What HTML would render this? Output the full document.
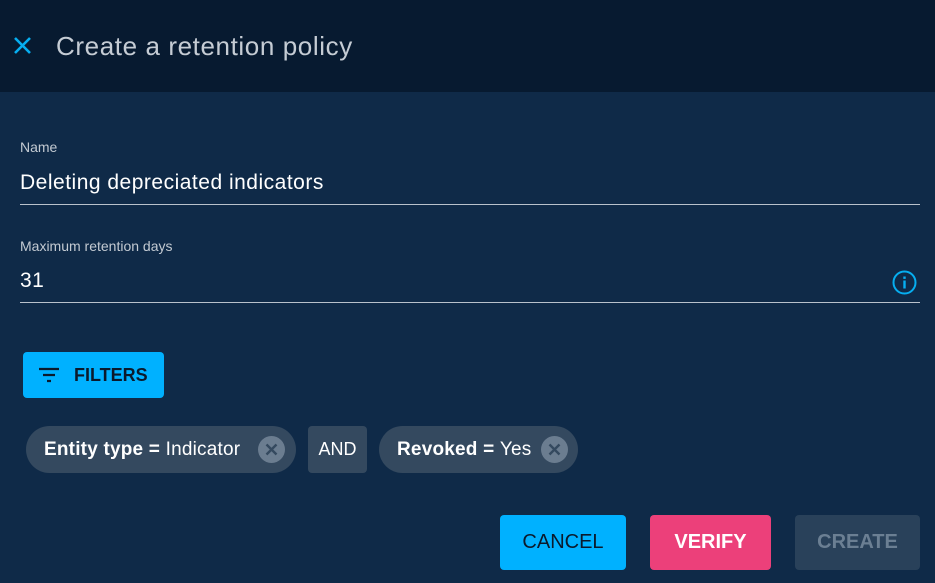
<!DOCTYPE html>
<html><head><style>
*{margin:0;padding:0;box-sizing:border-box}
body{width:935px;height:583px;background:#0f2a48;font-family:"Liberation Sans",sans-serif;position:relative;overflow:hidden;color:#fff}
.hdr{position:absolute;left:0;top:0;width:935px;height:92px;background:#071a30}
.ttl{position:absolute;left:56px;top:31px;font-size:26px;color:#c5ccd4;letter-spacing:0.6px}
.lbl{position:absolute;left:20px;font-size:14px;color:#c3cad2}
.val{position:absolute;left:20px;font-size:21px;color:#fff;letter-spacing:0.5px}
.line{position:absolute;left:20px;width:900px;height:1px;background:#b9c2cc}
.btn{position:absolute;border-radius:4px;font-size:20px;display:flex;align-items:center;justify-content:center;font-weight:bold}
.chip{position:absolute;top:426px;height:47px;background:#34495f;border-radius:24px;font-size:19px;display:flex;align-items:center;padding-left:18px;letter-spacing:0.2px}
.x{position:absolute;width:27px;height:27px;border-radius:50%;background:#6b7d90;top:10px}
</style></head><body>
<div class="hdr"></div>
<svg style="position:absolute;left:13px;top:36px" width="19" height="19" viewBox="0 0 19 19"><path d="M2 2L17 17M17 2L2 17" stroke="#06aef0" stroke-width="2.6"/></svg>
<div class="ttl">Create a retention policy</div>
<div class="lbl" style="top:139px">Name</div>
<div class="val" style="top:171px">Deleting depreciated indicators</div>
<div class="line" style="top:204px"></div>
<div class="lbl" style="top:238px">Maximum retention days</div>
<div class="val" style="top:269px">31</div>
<svg style="position:absolute;left:892px;top:270px" width="25" height="25" viewBox="0 0 25 25"><circle cx="12.5" cy="12.5" r="11" fill="none" stroke="#06aef0" stroke-width="2"/><rect x="11.3" y="10.5" width="2.4" height="8" fill="#06aef0"/><rect x="11.3" y="6.5" width="2.4" height="2.4" fill="#06aef0"/></svg>
<div class="line" style="top:302px"></div>
<div class="btn" style="left:23px;top:352px;width:141px;height:46px;background:#00b1ff;color:#0b1a2c;font-size:18px;justify-content:flex-start;padding-left:51px">FILTERS</div>
<svg style="position:absolute;left:38px;top:367px" width="22" height="16" viewBox="0 0 22 16"><path d="M1 2H21M5 8H17M9 14H13" stroke="#0b1a2c" stroke-width="2.2"/></svg>
<div class="chip" style="left:26px;width:270px"><b>Entity type =</b>&nbsp;Indicator<div class="x" style="left:232px"><svg width="27" height="27" viewBox="0 0 27 27"><path d="M8.5 8.5L18.5 18.5M18.5 8.5L8.5 18.5" stroke="#34495f" stroke-width="2.4"/></svg></div></div>
<div style="position:absolute;left:308px;top:426px;width:59px;height:47px;background:#34495f;border-radius:4px;font-size:18px;display:flex;align-items:center;justify-content:center">AND</div>
<div class="chip" style="left:379px;width:199px"><b>Revoked =</b>&nbsp;Yes<div class="x" style="left:162px"><svg width="27" height="27" viewBox="0 0 27 27"><path d="M8.5 8.5L18.5 18.5M18.5 8.5L8.5 18.5" stroke="#34495f" stroke-width="2.4"/></svg></div></div>
<div class="btn" style="left:500px;top:515px;width:126px;height:55px;background:#00b1ff;color:#0b1a2c;font-weight:normal">CANCEL</div>
<div class="btn" style="left:650px;top:515px;width:121px;height:55px;background:#ec407a;color:#fff">VERIFY</div>
<div class="btn" style="left:795px;top:515px;width:125px;height:55px;background:#29415a;color:#6b7f93">CREATE</div>
</body></html>
